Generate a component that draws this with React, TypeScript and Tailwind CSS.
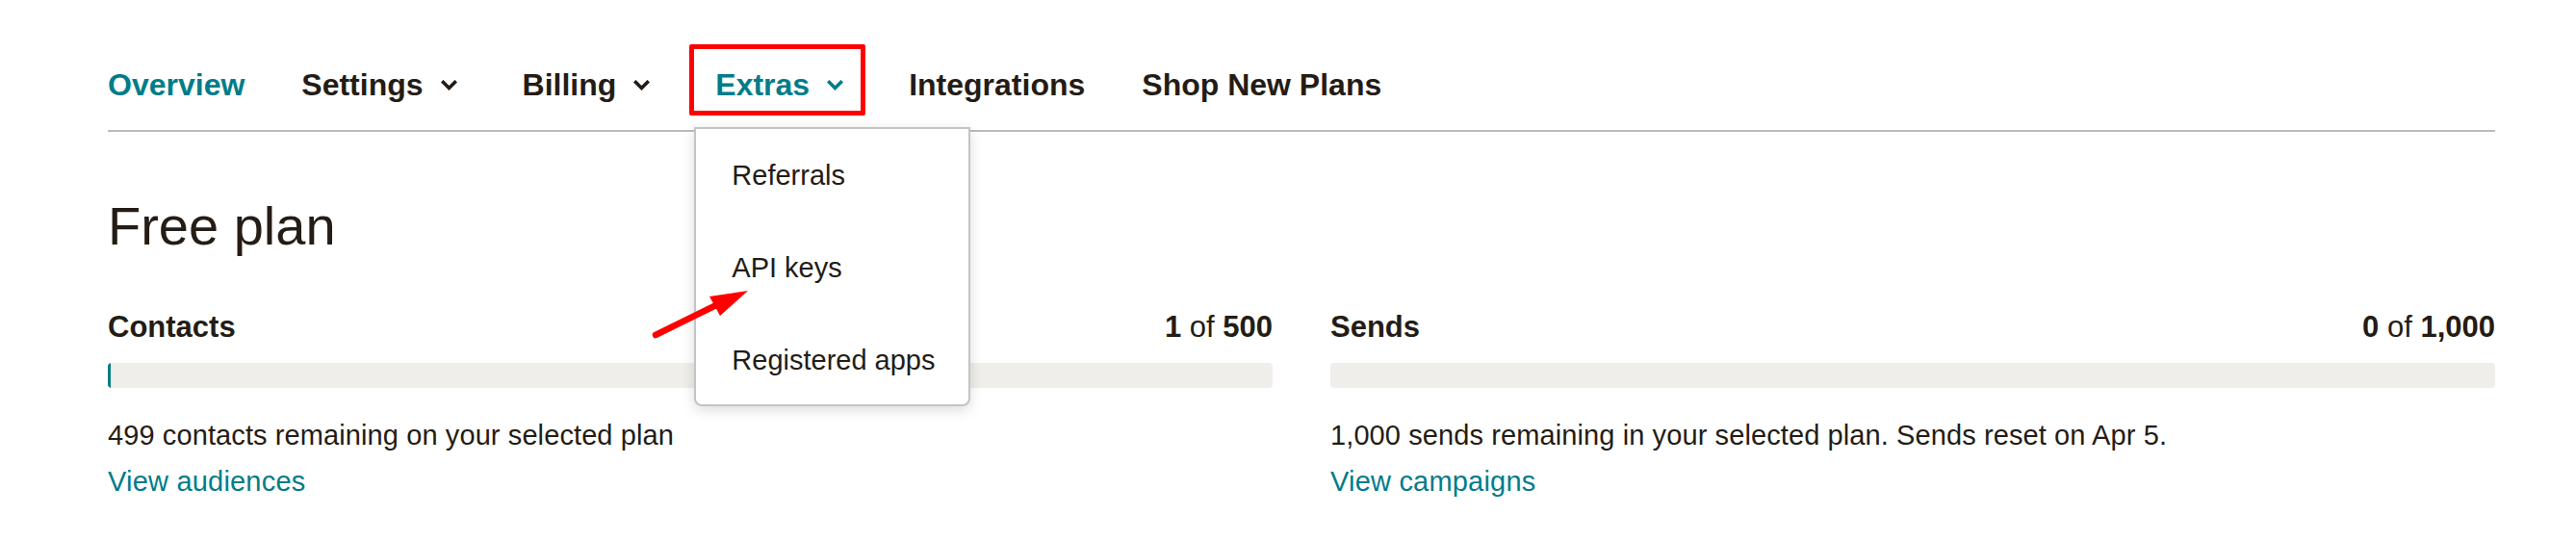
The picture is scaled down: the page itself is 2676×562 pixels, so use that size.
import React from 'react';

const TEAL = '#007c89';

function Chevron({ color }: { color: string }) {
  return (
    <span className="ml-[18px] mr-[9px] inline-flex w-[17px] items-center">
      <svg width="17" height="11" viewBox="0 0 17 11" fill="none">
        <path d="M2.5 2.5 L8.5 8.5 L14.5 2.5" stroke={color} strokeWidth="3.6" strokeLinejoin="miter" strokeLinecap="square" />
      </svg>
    </span>
  );
}

function UsageColumn({
  title,
  used,
  total,
  percent,
  note,
  link,
}: {
  title: string;
  used: string;
  total: string;
  percent: number;
  note: string;
  link: string;
}) {
  return (
    <div>
      <div className="flex items-baseline justify-between text-[31px] leading-[40px]">
        <span className="font-bold">{title}</span>
        <span>
          <b className="font-bold">{used}</b> of <b className="font-bold">{total}</b>
        </span>
      </div>
      <div className="mt-[17px] h-[26px] overflow-hidden rounded-[4px] bg-[#efeeea]">
        {percent > 0 && <div className="h-full min-w-[3px] rounded-l-[2px] bg-[#007c89]" style={{ width: `${percent}%` }} />}
      </div>
      <p className="mt-[29px] text-[29px] leading-[40px] tracking-[0.1px]">{note}</p>
      <a className="mt-[8px] block text-[29px] font-medium leading-[40px] tracking-[0.2px] text-[#007c89]">{link}</a>
    </div>
  );
}

export default function App() {
  return (
    <div className="relative min-h-[562px] w-full bg-white font-['Liberation_Sans',Arial,sans-serif] text-[#241c15]">
      <div className="ml-[112px] w-[2480px]">
        <nav className="flex items-start gap-[59px] border-b-2 border-[#c0bbb6] pb-[23px] pt-[64px] text-[32px] font-bold leading-[48px]">
          <a className="text-[#007c89]">Overview</a>
          <a className="flex items-center">
            Settings
            <Chevron color="#241c15" />
          </a>
          <a className="flex items-center">
            Billing
            <Chevron color="#241c15" />
          </a>
          <div className="relative flex items-center text-[#007c89]">
            Extras
            <Chevron color={TEAL} />
            <span className="pointer-events-none absolute -left-[27px] -top-[18px] h-[74px] w-[183px] rounded-[2px] border-[5px] border-[#ff0000]" />
            <div className="absolute -left-[22px] top-[68px] z-10 flex h-[290px] w-[287px] flex-col gap-[56px] rounded-b-[8px] border-2 border-[#c4c4c4] bg-white pl-[37px] pt-[28px] text-[29px] font-normal leading-[40px] text-[#241c15] shadow-[0_4px_14px_rgba(0,0,0,0.14)]">
              <span>Referrals</span>
              <span>API keys</span>
              <span>Registered apps</span>
            </div>
          </div>
          <a>Integrations</a>
          <a>Shop New Plans</a>
        </nav>

        <h1 className="mt-[65px] text-[56px] font-normal leading-[66px]">Free plan</h1>

        <div className="mt-[52px] grid grid-cols-2 gap-x-[60px]">
          <UsageColumn
            title="Contacts"
            used="1"
            total="500"
            percent={0.2}
            note="499 contacts remaining on your selected plan"
            link="View audiences"
          />
          <UsageColumn
            title="Sends"
            used="0"
            total="1,000"
            percent={0}
            note="1,000 sends remaining in your selected plan. Sends reset on Apr 5."
            link="View campaigns"
          />
        </div>
      </div>

      {/* annotation arrow pointing at "API keys" */}
      <svg className="pointer-events-none absolute left-[676px] top-[298px] z-20" width="106" height="56" viewBox="0 0 106 56">
        <line x1="5" y1="50" x2="68" y2="19" stroke="#ff0000" strokeWidth="6.5" strokeLinecap="round" />
        <polygon points="101,4 61,10 72,30" fill="#ff0000" />
      </svg>
    </div>
  );
}
